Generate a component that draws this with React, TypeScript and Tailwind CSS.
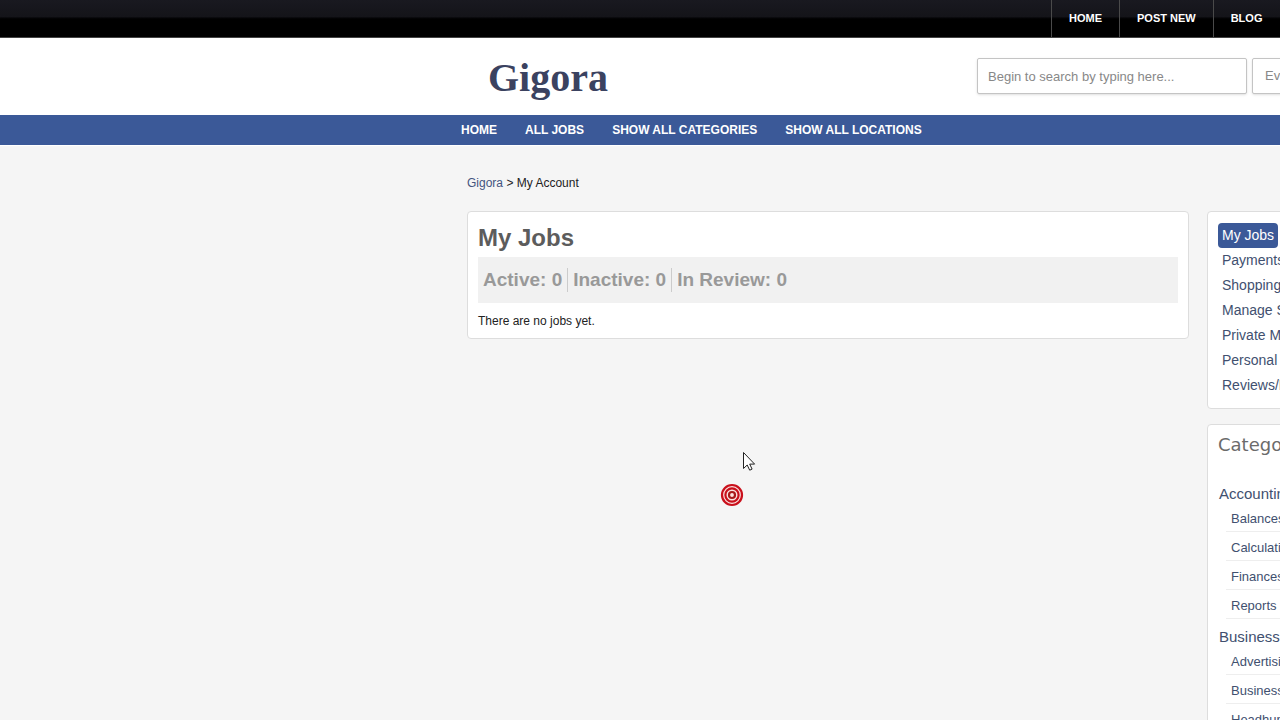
import React from 'react';

interface Category {
  name: string;
  children: string[];
}

const topLinks = ['HOME', 'POST NEW', 'BLOG'];

const mainLinks = ['HOME', 'ALL JOBS', 'SHOW ALL CATEGORIES', 'SHOW ALL LOCATIONS'];

const accountLinks = [
  'My Jobs',
  'Payments',
  'Shopping',
  'Manage Sales',
  'Private Messages',
  'Personal Info',
  'Reviews/Feedback',
];

const stats = [
  { label: 'Active', value: 0 },
  { label: 'Inactive', value: 0 },
  { label: 'In Review', value: 0 },
];

const categories: Category[] = [
  { name: 'Accounting', children: ['Balances', 'Calculations', 'Finances', 'Reports'] },
  { name: 'Business', children: ['Advertising', 'Business Plans', 'Headhunting'] },
];

const TopBar: React.FC = () => (
  <nav className="h-[38px] pl-[1051px] flex overflow-hidden border-b border-[#444] bg-linear-to-b from-[#191920] from-0% via-[#141419] via-45% to-black to-55%">
    {topLinks.map((link) => (
      <a
        key={link}
        href="#"
        className="flex shrink-0 items-center border-l border-[#4a4a4a] px-[17px] text-[11px] font-bold text-white whitespace-nowrap"
      >
        {link}
      </a>
    ))}
  </nav>
);

const Header: React.FC = () => (
  <header className="h-[77px] pl-[488px] pt-5 flex items-start overflow-hidden bg-white">
    <a
      href="#"
      className="w-[489px] shrink-0 font-['Liberation_Serif',serif] text-[40px] leading-[40px] font-bold text-[#3b4260]"
    >
      Gigora
    </a>
    <form className="flex shrink-0 gap-[5px]" onSubmit={(e) => e.preventDefault()}>
      <input
        type="text"
        aria-label="Search jobs"
        placeholder="Begin to search by typing here..."
        className="h-9 w-[270px] rounded-xs border border-[#c4c4c4] bg-white px-[10px] text-[13px] shadow-sm placeholder:text-[#888]"
      />
      <select
        aria-label="Location"
        className="h-9 w-[180px] appearance-none rounded-xs border border-[#c4c4c4] bg-white px-3 text-[13px] text-[#888] shadow-sm"
      >
        <option>Everywhere</option>
      </select>
    </form>
  </header>
);

const MainNav: React.FC = () => (
  <nav className="h-[30px] pl-[447px] flex items-center bg-[#3b5998] shadow-[0_1px_1px_#fff]">
    {mainLinks.map((link) => (
      <a key={link} href="#" className="px-[14px] text-[12px] font-bold text-white whitespace-nowrap">
        {link}
      </a>
    ))}
  </nav>
);

const JobsPanel: React.FC = () => (
  <section className="w-[722px] shrink-0 rounded-sm border border-[#ddd] bg-white px-[10px] pt-[10px] pb-[9px]">
    <h1 className="mb-[3px] text-[24px] leading-8 font-bold text-[#5c5c5c]">My Jobs</h1>
    <div className="flex bg-[#f1f1f1] py-[11px]">
      {stats.map((stat) => (
        <h2
          key={stat.label}
          className="border-r border-[#ccc] px-[5px] text-[19px] leading-6 font-bold text-[#999] last:border-r-0"
        >
          {stat.label}: {stat.value}
        </h2>
      ))}
    </div>
    <p className="mt-[10px] text-[12px] leading-4 text-[#222]">There are no jobs yet.</p>
  </section>
);

const AccountMenu: React.FC = () => (
  <section className="rounded-sm border border-[#ddd] bg-white px-[10px] pt-[11px] pb-[10px]">
    <ul>
      {accountLinks.map((link, index) => (
        <li key={link} className="flex">
          <a
            href="#"
            className={`rounded-sm px-1 text-[14px] leading-[25px] whitespace-nowrap ${
              index === 0 ? 'bg-[#3b5998] text-white' : 'text-[#41506f]'
            }`}
          >
            {link}
          </a>
        </li>
      ))}
    </ul>
  </section>
);

const CategoryMenu: React.FC = () => (
  <section className="rounded-sm border border-[#ddd] bg-white px-[10px] py-2">
    <h3 className="mb-[25px] font-['DejaVu_Sans',sans-serif] text-[18px] leading-6 text-[#6b6b6b]">Categories</h3>
    {categories.map((category) => (
      <div key={category.name}>
        <a href="#" className="block pl-px text-[15px] leading-6 text-[#41506f]">
          {category.name}
        </a>
        <ul className="ml-2 pt-[5px] pb-[6px] space-y-2">
          {category.children.map((child) => (
            <li key={child} className="border-b border-[#eee] pl-[5px] pb-[4px]">
              <a href="#" className="block text-[13px] leading-4 text-[#41506f]">
                {child}
              </a>
            </li>
          ))}
        </ul>
      </div>
    ))}
  </section>
);

const Pointer: React.FC = () => (
  <>
    <svg className="absolute left-[742px] top-[451px]" width="14" height="21" viewBox="0 0 14 21" aria-hidden="true">
      <path
        d="M1.5 1.5v16l3.7-3.5 2.5 5.2 2.4-1.1-2.4-5h4.9z"
        fill="#fff"
        stroke="#222"
        strokeWidth="1"
      />
    </svg>
    <svg className="absolute left-[720px] top-[483px]" width="24" height="24" viewBox="0 0 24 24" aria-hidden="true">
      <circle cx="12" cy="12" r="11" fill="#fbe3e0" />
      <g fill="none" stroke="#c9101c" strokeWidth="2.2">
        <circle cx="12" cy="12" r="10" />
        <circle cx="12" cy="12" r="6.6" />
        <circle cx="12" cy="12" r="3" stroke="#a81a1a" />
      </g>
    </svg>
  </>
);

const App: React.FC = () => {
  return (
    <div className="relative h-screen overflow-hidden bg-[#f5f5f5] font-['Liberation_Sans',Arial,sans-serif]">
      <TopBar />
      <Header />
      <MainNav />
      <main className="pl-[467px] pt-[30px]">
        <div className="mb-5 text-[12px] leading-4 text-[#222]">
          <a href="#" className="text-[#44547f]">
            Gigora
          </a>{' '}
          &gt; My Account
        </div>
        <div className="flex items-start gap-[18px]">
          <JobsPanel />
          <aside className="flex w-[260px] shrink-0 flex-col gap-[15px]">
            <AccountMenu />
            <CategoryMenu />
          </aside>
        </div>
      </main>
      <Pointer />
    </div>
  );
};

export default App;
